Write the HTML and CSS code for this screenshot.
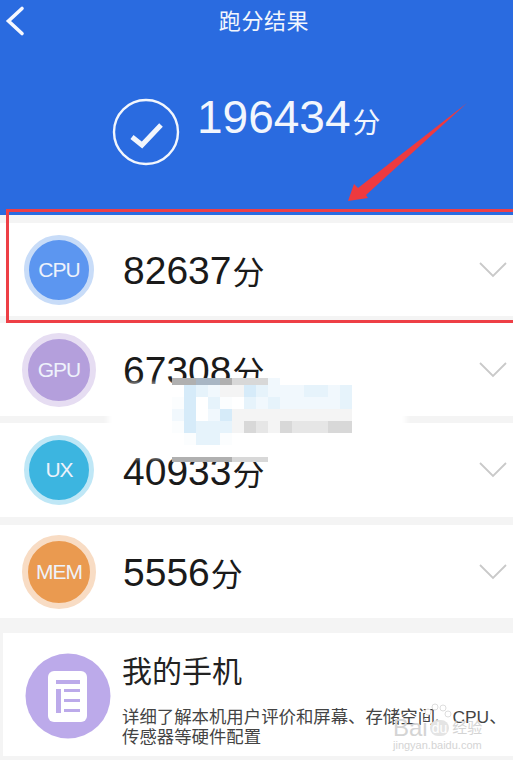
FILE: index.html
```html
<!DOCTYPE html>
<html lang="zh-CN">
<head>
  <meta charset="UTF-8">
  <meta name="viewport" content="width=device-width, initial-scale=1.0">
  <title>跑分结果</title>
  <link rel="stylesheet" href="styles.css">
</head>
<body>

<header class="topo">
  <div class="barra">
    <svg class="voltar" width="28" height="40" viewBox="0 0 28 40"><path d="M22 8.5 L8.5 21 L22 33.5" fill="none" stroke="#f6f8fe" stroke-width="3.6" stroke-linecap="round"/></svg>
    <h1>跑分结果</h1>
  </div>
  <div class="total">
    <svg class="check" width="68" height="68" viewBox="0 0 68 68">
      <circle cx="34" cy="34" r="32" fill="none" stroke="#f2f6fd" stroke-width="2.4"/>
      <path d="M20 39 L30 47 L49 27" fill="none" stroke="#f2f6fd" stroke-width="5"/>
    </svg>
    <p class="pontos">196434<span>分</span></p>
  </div>
</header>

<main>
  <!-- resultados -->
  <div class="linha">
    <div class="bola cpu">CPU</div>
    <p class="nota">82637<span>分</span></p>
    <svg class="seta" width="30" height="18" viewBox="0 0 30 18"><path d="M2 2 L15 15 L28 2" fill="none" stroke="#c9c9c9" stroke-width="1.8"/></svg>
  </div>
  <div class="linha">
    <div class="bola gpu">GPU</div>
    <p class="nota">67308<span>分</span></p>
    <svg class="seta" width="30" height="18" viewBox="0 0 30 18"><path d="M2 2 L15 15 L28 2" fill="none" stroke="#c9c9c9" stroke-width="1.8"/></svg>
  </div>
  <div class="linha">
    <div class="bola ux">UX</div>
    <p class="nota">40933<span>分</span></p>
    <svg class="seta" width="30" height="18" viewBox="0 0 30 18"><path d="M2 2 L15 15 L28 2" fill="none" stroke="#c9c9c9" stroke-width="1.8"/></svg>
  </div>
  <div class="linha">
    <div class="bola mem">MEM</div>
    <p class="nota">5556<span>分</span></p>
    <svg class="seta" width="30" height="18" viewBox="0 0 30 18"><path d="M2 2 L15 15 L28 2" fill="none" stroke="#c9c9c9" stroke-width="1.8"/></svg>
  </div>

  <!-- meu celular -->
  <div class="cartao">
    <svg class="icone" width="86" height="86" viewBox="0 0 86 86">
      <circle cx="43" cy="43" r="42.5" fill="#bcaaea"/>
      <rect x="23" y="18" width="39" height="51" rx="6" fill="#fff"/>
      <rect x="31" y="27" width="24" height="4" fill="#bcaaea"/>
      <rect x="31" y="36" width="5" height="24" fill="#bcaaea"/>
      <rect x="39" y="36" width="16" height="3" fill="#bcaaea"/>
      <rect x="39" y="46" width="16" height="3" fill="#bcaaea"/>
      <rect x="39" y="56" width="16" height="3" fill="#bcaaea"/>
    </svg>
    <div class="textos">
      <h2>我的手机</h2>
      <p>详细了解本机用户评价和屏幕、存储空间、CPU、传感器等硬件配置</p>
    </div>
  </div>
</main>

<!-- marcacoes por cima do print -->
<div class="moldura"></div>
<svg class="flecha" width="130" height="105" viewBox="0 0 130 105"><polygon points="127,3 26,95 28,98 8,101 14,84 18,88" fill="#ee3a3f"/></svg>
<div class="borrado"></div>
<div class="mosaico">
  <i class="h"></i><i class="h"></i><i class="k"></i><i class="k"></i><i class="h"></i><i class="g"></i><i class="g"></i><i class="g"></i><i class="j"></i><i></i><i></i><i></i><i></i><i></i><i></i>
  <i class="a"></i><i class="e"></i><i class="d"></i><i class="j"></i><i class="c"></i><i class="c"></i><i class="e"></i><i class="d"></i><i class="j"></i><i class="j"></i><i class="j"></i><i class="d"></i><i class="d"></i><i class="j"></i><i class="d"></i>
  <i class="b"></i><i class="e"></i><i class="a"></i><i class="d"></i><i class="b"></i><i class="a"></i><i class="d"></i><i class="j"></i><i class="d"></i><i class="j"></i><i class="j"></i><i class="j"></i><i class="j"></i><i class="j"></i><i class="d"></i>
  <i class="j"></i><i class="e"></i><i class="a"></i><i class="j"></i><i class="e"></i><i class="c"></i><i class="c"></i><i class="c"></i><i class="c"></i><i class="c"></i><i class="c"></i><i class="c"></i><i class="c"></i><i class="c"></i><i class="c"></i>
  <i class="b"></i><i class="e"></i><i class="d"></i><i class="d"></i><i class="d"></i><i class="c"></i><i class="g"></i><i class="f"></i><i class="c"></i><i class="g"></i><i class="f"></i><i class="f"></i><i class="f"></i><i class="g"></i><i class="g"></i>
  <i class="a"></i><i class="b"></i><i class="d"></i><i class="d"></i><i class="b"></i><i class="a"></i><i class="a"></i><i class="a"></i><i class="a"></i><i class="a"></i><i class="a"></i><i class="a"></i><i class="a"></i><i class="a"></i><i class="a"></i>
  <i class="a"></i><i class="a"></i><i class="a"></i><i class="a"></i><i class="a"></i><i class="a"></i><i class="a"></i><i class="a"></i><i class="a"></i><i class="a"></i><i class="a"></i><i class="a"></i><i class="a"></i><i class="a"></i><i class="a"></i>
  <i class="h"></i><i class="h"></i><i class="h"></i><i class="h"></i><i class="h"></i><i class="g"></i><i class="g"></i><i class="g"></i><i></i><i></i><i></i><i></i><i></i><i></i><i></i>
</div>
<div class="marca">
  <svg class="pata" width="34" height="22" viewBox="0 0 34 22">
    <circle cx="9" cy="9" r="3" fill="#fff" stroke="#ddd"/><circle cx="16" cy="4" r="3" fill="#fff" stroke="#ddd"/><circle cx="24" cy="5" r="3" fill="#fff" stroke="#ddd"/><circle cx="29" cy="11" r="3" fill="#fff" stroke="#ddd"/>
  </svg>
  <div class="logo">Bai<b>du</b><span>经验</span></div>
  <small>jingyan.baidu.com</small>
</div>

</body>
</html>
```

FILE: styles.css
```css
* {
  margin: 0;
  padding: 0;
  box-sizing: border-box;
}
html, body {
  height: 760px;
  overflow: hidden;
}
body {
  position: relative;
  width: 513px;
  background-color: #f4f4f4;
  font-family: "Liberation Sans", "Noto Sans CJK SC", sans-serif;
  color: #222;
}
.topo {
  height: 215px;
  background-color: #2a6be0;
  color: #f2f6fd;
}
.barra {
  display: flex;
  justify-content: center;
  position: relative;
  padding-top: 7px;
  padding-left: 15px;
}
.voltar {
  position: absolute;
  left: 0;
  top: 0;
}
.barra h1 {
  font-size: 22px;
  font-weight: 400;
  line-height: 30px;
  letter-spacing: 0.6px;
}
.total {
  display: flex;
  padding: 61px 0 0 112px;
  gap: 17px;
}
.pontos {
  font-size: 46px;
  line-height: 50px;
  margin-top: -6px;
}
.pontos span {
  font-size: 28px;
  margin-left: 2px;
}
main {
  padding-top: 8px;
}
.linha {
  display: flex;
  align-items: center;
  height: 93px;
  margin-bottom: 7px;
  padding: 0 5px 0 24px;
  background: white;
}
.linha:nth-child(3) {
  height: 94px;
  margin-bottom: 8px;
}
.linha:nth-child(4) {
  margin-bottom: 15px;
}
.bola {
  width: 70px;
  height: 70px;
  flex: none;
  border-radius: 50%;
  display: flex;
  align-items: center;
  justify-content: center;
  color: #eef2fb;
  font-size: 21px;
  letter-spacing: -1px;
}
.cpu {
  background: #5c96f0;
  border: 5px solid #c8dcf8;
}
.gpu {
  width: 74px;
  height: 74px;
  margin: 0 -2px;
  background: #b49fdc;
  border: 6px solid #e6ddf2;
}
.ux {
  background: #3cb5e0;
  border: 5px solid #bfe7f6;
}
.mem {
  width: 74px;
  height: 74px;
  margin: 0 -2px;
  background: #ea9a50;
  border: 6px solid #f8dcc4;
}
.nota {
  flex: 1;
  margin-left: 29px;
  margin-top: 5px;
  font-size: 39px;
  line-height: 46px;
  color: #1a1a1a;
}
.nota span {
  font-size: 32px;
  margin-left: 1px;
}
.cartao {
  display: flex;
  margin-left: 3px;
  height: 123px;
  padding: 20px 0 0 22px;
  background: white;
}
.icone {
  flex: none;
}
.textos {
  margin-left: 11px;
}
.textos h2 {
  font-size: 30px;
  font-weight: 400;
  line-height: 36px;
  margin-top: 1px;
  color: #222;
}
.textos p {
  margin-top: 17px;
  width: 391px;
  font-size: 17.4px;
  line-height: 20px;
  color: #444;
}
.moldura {
  position: absolute;
  left: 6px;
  top: 209px;
  width: 520px;
  height: 114px;
  border: 3px solid #ee3f46;
}
.flecha {
  position: absolute;
  left: 340px;
  top: 100px;
}
.borrado {
  position: absolute;
  left: 108px;
  top: 384px;
  width: 298px;
  height: 73px;
  background: #fff;
  filter: blur(3px);
}
.mosaico {
  position: absolute;
  left: 172px;
  top: 378px;
  display: grid;
  grid-template-columns: repeat(15, 12px);
  grid-template-rows: 7px repeat(6, 12px) 5px;
}
.a { background: #fff; }
.b { background: #fbfdfe; }
.c { background: #f4f4f4; }
.d { background: #e6f3fb; }
.e { background: #d6ebf9; }
.f { background: #e6e6e6; }
.g { background: #d8d8d8; }
.h { background: #b0b0b0; }
.j { background: #f1f8fd; }
.k { background: #a8b6c4; }
.marca {
  position: absolute;
  left: 393px;
  top: 716px;
  color: #d4d4d4;
}
.pata {
  position: absolute;
  left: 26px;
  top: -13px;
}
.logo {
  display: flex;
  align-items: center;
  font-size: 24px;
  line-height: 24px;
}
.logo b {
  font-size: 14px;
  font-weight: 400;
  line-height: 16px;
  margin: 0 3px 0 2px;
  padding: 0 2px;
  border-radius: 8px;
  background: #e4e4e4;
  color: #fff;
}
.logo span {
  font-size: 15px;
}
.marca small {
  display: block;
  font-size: 11px;
  line-height: 12px;
  margin-top: -1px;
}
```
